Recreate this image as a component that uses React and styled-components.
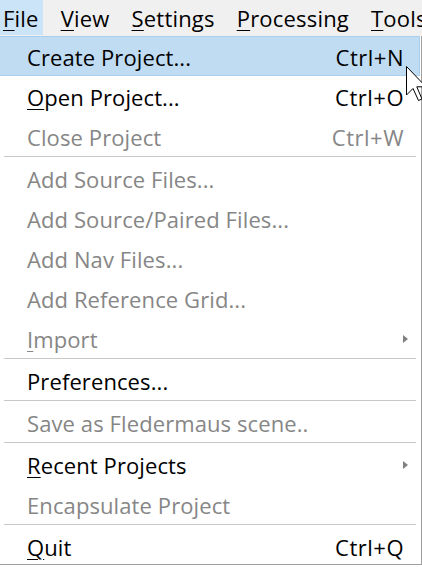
import React from "react";
import styled, { createGlobalStyle } from "styled-components";

const GlobalStyle = createGlobalStyle`
  html, body {
    margin: 0;
    padding: 0;
    background: #ffffff;
    overflow: hidden;
  }
  body {
    font-family: "Open Sans", "Noto Sans", "Liberation Sans", sans-serif;
  }
`;

const Window = styled.div`
  position: relative;
  width: 422px;
  height: 567px;
  overflow: hidden;
  background: #ffffff;
`;

const MenuBar = styled.div`
  display: flex;
  height: 35px;
  background: #f0f0f0;
  border-bottom: 1px solid #f0f0f0;
  white-space: nowrap;
  overflow: hidden;
`;

const BarItem = styled.div`
  display: flex;
  align-items: center;
  padding: ${(p) => (p.$first ? "0 4px 0 3px" : "0 11px")};
  margin-right: ${(p) => (p.$first ? "7px" : "0")};
  font-size: 22px;
  letter-spacing: 0.2px;
  color: #000;
  background: ${(p) => (p.$active ? "#cce4f7" : "transparent")};
`;

const Mn = styled.span`
  text-decoration: underline;
  text-decoration-thickness: 1px;
  text-underline-offset: 3px;
`;

const Dropdown = styled.div`
  width: 421px;
  height: 528px;
  border-right: 1px solid #a0a0a0;
  border-bottom: 1px solid #a0a0a0;
  background: #ffffff;
  display: flex;
  flex-direction: column;
  overflow: hidden;
`;

const Row = styled.div`
  display: flex;
  align-items: center;
  height: 40px;
  flex: none;
  box-sizing: border-box;
  padding: 2px 15px 0 27px;
  font-size: 22px;
  letter-spacing: 0.1px;
  color: ${(p) => (p.$disabled ? "#868686" : "#000")};
  background: ${(p) => (p.$hover ? "#bfdcf2" : "transparent")};
  border: 1px solid ${(p) => (p.$hover ? "#a8d0ee" : "transparent")};
  border-left: none;
  margin-right: 1px;
`;

const Label = styled.span`
  flex: 1;
  white-space: nowrap;
`;

const Shortcut = styled.span`
  white-space: nowrap;
  letter-spacing: 0.5px;
`;

const Arrow = styled.span`
  width: 0;
  height: 0;
  margin-right: -4px;
  border-top: 4px solid transparent;
  border-bottom: 4px solid transparent;
  border-left: 5px solid #808080;
`;

const Separator = styled.div`
  flex: none;
  height: 1px;
  margin: 0 5px 1px 4px;
  background: #c8c8c8;
`;

const Cursor = styled.svg`
  position: absolute;
  left: 406px;
  top: 66px;
`;

const items = [
  { label: "Create Project...", shortcut: "Ctrl+N", hover: true },
  { label: "Open Project...", mn: true, shortcut: "Ctrl+O" },
  { label: "Close Project", shortcut: "Ctrl+W", disabled: true },
  { sep: true },
  { label: "Add Source Files...", disabled: true },
  { label: "Add Source/Paired Files...", disabled: true },
  { label: "Add Nav Files...", disabled: true },
  { label: "Add Reference Grid...", disabled: true },
  { label: "Import", mn: true, disabled: true, sub: true },
  { sep: true },
  { label: "Preferences..." },
  { sep: true },
  { label: "Save as Fledermaus scene..", disabled: true },
  { sep: true },
  { label: "Recent Projects", mn: true, sub: true },
  { label: "Encapsulate Project", disabled: true },
  { sep: true },
  { label: "Quit", mn: true, shortcut: "Ctrl+Q" },
];

function Mnemonic({ text }) {
  return (
    <>
      <Mn>{text[0]}</Mn>
      {text.slice(1)}
    </>
  );
}

export default function App() {
  return (
    <Window>
      <GlobalStyle />
      <MenuBar>
        <BarItem $first $active>
          <Mnemonic text="File" />
        </BarItem>
        <BarItem>
          <Mnemonic text="View" />
        </BarItem>
        <BarItem>
          <Mnemonic text="Settings" />
        </BarItem>
        <BarItem>
          <Mnemonic text="Processing" />
        </BarItem>
        <BarItem>
          <Mnemonic text="Tools" />
        </BarItem>
      </MenuBar>
      <Dropdown>
        {items.map((it, i) =>
          it.sep ? (
            <Separator key={i} />
          ) : (
            <Row key={i} $disabled={it.disabled} $hover={it.hover}>
              <Label>{it.mn ? <Mnemonic text={it.label} /> : it.label}</Label>
              {it.shortcut && <Shortcut>{it.shortcut}</Shortcut>}
              {it.sub && <Arrow />}
            </Row>
          )
        )}
      </Dropdown>
      <Cursor width="22" height="36" viewBox="0 0 22 36">
        <path
          d="M0.5 0.5 L0.5 29 L7 22.5 L12.5 34.5 L16 33 L10.8 20.8 L20 20.8 Z"
          fill="#ffffff"
          stroke="#000000"
          strokeWidth="1"
        />
      </Cursor>
    </Window>
  );
}
